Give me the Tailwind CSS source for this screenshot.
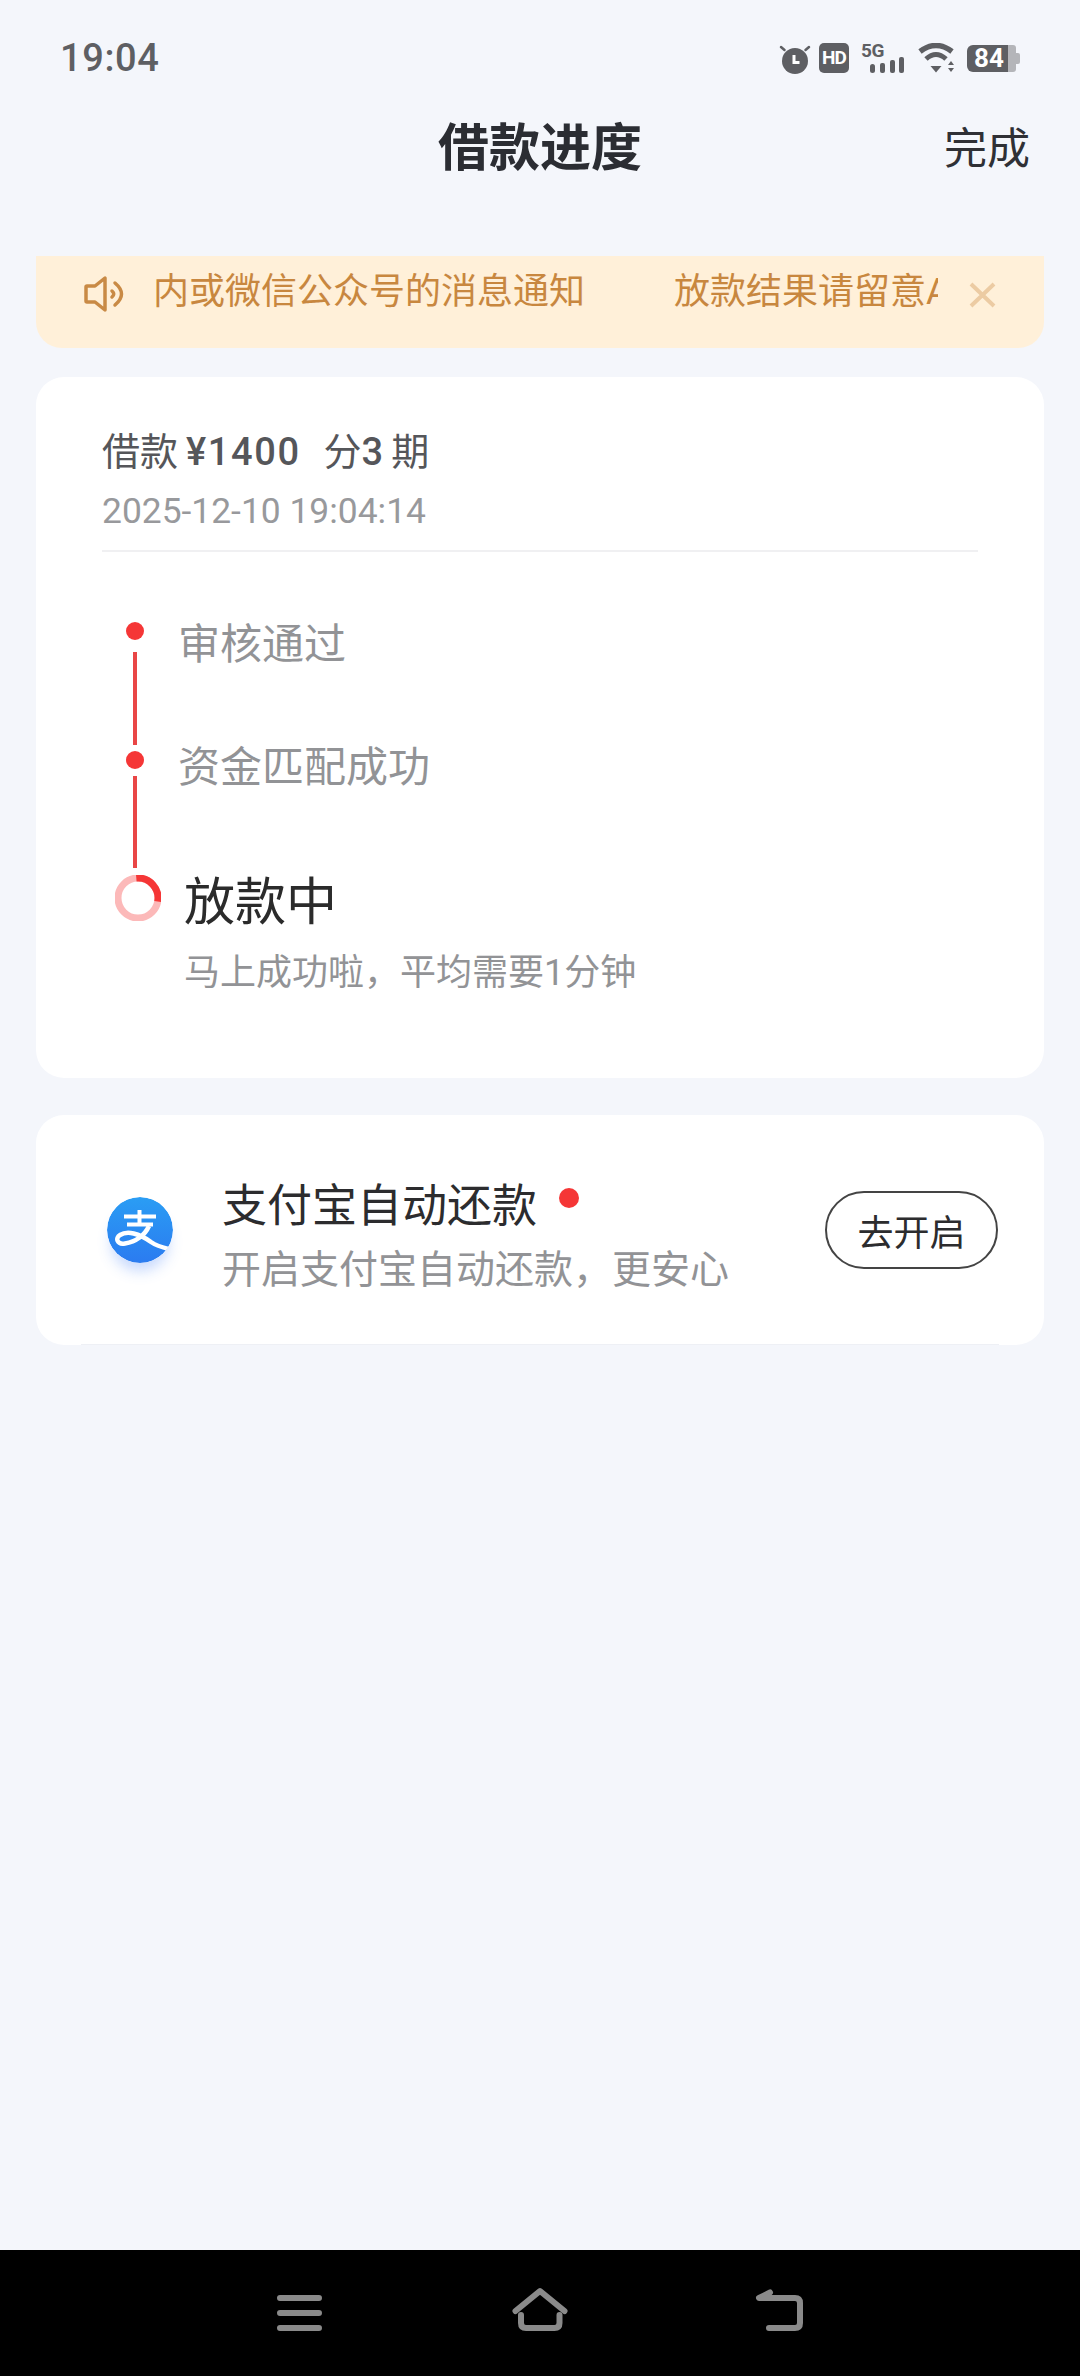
<!DOCTYPE html>
<html lang="zh-CN">
<head>
    <meta charset="UTF-8" />
    <meta name="viewport" content="width=device-width, initial-scale=1.0" />
    <title>借款进度</title>
    <script src="https://cdn.jsdelivr.net/npm/@tailwindcss/browser@4"></script>
</head>
<body class="bg-[#f4f6fb]">
    <div class="w-[1080px] h-[2376px] flex flex-col overflow-hidden bg-[#f4f6fb] font-[Roboto,'Noto_Sans_CJK_SC',sans-serif]">

        <!-- Status bar -->
        <div class="h-[116px] flex items-center justify-between pl-[60px] pr-[60px] text-[#5e5f63]">
            <div class="text-[38px] leading-[44px] font-medium tracking-[0.6px]">19:04</div>
            <div class="flex items-center h-[30px]">
                <svg class="w-[34px] h-[32px]" viewBox="0 0 34 32">
                    <circle cx="17" cy="19" r="13" fill="#5e5f63" />
                    <path d="M3 5 6.5 8M31 5 27.5 8" stroke="#5e5f63" stroke-width="2.5" stroke-linecap="round" />
                    <path d="M16 13v7.5h5.5" fill="none" stroke="#fff" stroke-width="3" />
                </svg>
                <div class="ml-[7px] w-[30px] h-[30px] rounded-[5px] bg-[#5e5f63] flex items-center justify-center text-white text-[19px] leading-[30px] font-bold tracking-[-1px]">HD</div>
                <svg class="ml-[12px] w-[44px] h-[30px] overflow-visible" viewBox="0 0 44 30">
                    <text x="0" y="14" font-size="19" font-weight="700" letter-spacing="-0.5" fill="#5e5f63">5G</text>
                    <rect x="9" y="21" width="5" height="9" rx="2.5" fill="#5e5f63" />
                    <rect x="19" y="20" width="5" height="10" rx="2" fill="#5e5f63" />
                    <rect x="29" y="17" width="5" height="13" rx="2" fill="#5e5f63" />
                    <rect x="38" y="14" width="5" height="16" rx="2" fill="#5e5f63" />
                </svg>
                <svg class="ml-[13px] w-[37px] h-[30px]" viewBox="0 0 37 30">
                    <path d="M2 8.5Q18 -3.5 34 8.5" fill="none" stroke="#5e5f63" stroke-width="5.5" />
                    <path d="M8 16Q18 7 28 16" fill="none" stroke="#5e5f63" stroke-width="5" />
                    <path d="M12.5 23h11L18 29.5z" fill="#5e5f63" />
                    <path d="M30 22h6l-3-4zM30 25h6l-3 4z" fill="#5e5f63" />
                </svg>
                <div class="ml-[12px] flex items-center">
                    <div class="w-[41px] h-[27px] rounded-l-[6px] bg-[#5e5f63] text-white text-[26px] leading-[27px] font-bold text-center pl-[3px]">84</div>
                    <div class="w-[8px] h-[27px] rounded-r-[3px] bg-[#b4b5b9]"></div>
                    <div class="w-[4px] h-[11px] rounded-r-[2px] bg-[#b4b5b9]"></div>
                </div>
            </div>
        </div>

        <!-- Header -->
        <div class="h-[62px] grid grid-cols-[1fr_auto_1fr] items-center px-[50px]">
            <div></div>
            <div class="pt-[2px] text-[51px] leading-[62px] font-bold text-[#2b2d33]">借款进度</div>
            <div class="pt-[2px] justify-self-end text-[43px] leading-[62px] text-[#2f3035]">完成</div>
        </div>

        <!-- Notice banner -->
        <div class="mt-[78px] mx-[36px] h-[92px] rounded-b-[26px] bg-[#fff0d9] flex items-start pl-[46px] shrink-0">
            <svg class="mt-[18px] w-[46px] h-[40px] shrink-0" viewBox="0 0 46 40" fill="none" stroke="#c98a45" stroke-width="3.5" stroke-linecap="round" stroke-linejoin="round">
                <path d="M5 12h8l10-8v32l-10-8H5a1 1 0 0 1-1-1V13a1 1 0 0 1 1-1z" />
                <path d="M30 17q3.5 3 0 6M33 9q13 11 0 22" />
            </svg>
            <div class="ml-[23px] mt-[11px] w-[787px] overflow-hidden flex whitespace-nowrap pl-[2px] text-[36px] leading-[50px] text-[#c8873f]">
                <span>内或微信公众号的消息通知</span>
                <span class="ml-[89px]">放款结果请留意App内或微信公众号的消息通知</span>
            </div>
            <svg class="ml-[31px] mt-[26px] w-[27px] h-[26px] shrink-0" viewBox="0 0 27 26" fill="none" stroke="#eccba3" stroke-width="4">
                <path d="M2 2l23 22M25 2 2 24" />
            </svg>
        </div>

        <!-- Progress card -->
        <div class="mt-[29px] mx-[36px] h-[701px] rounded-[28px] bg-white pt-[53px] px-[66px] shrink-0">
            <div class="text-[38px] leading-[44px] text-[#55565a]">借款<span class="ml-[8px] font-medium tracking-[1.6px]">¥1400</span><span class="ml-[23px]">分</span><span class="font-medium">3</span><span class="ml-[8px]">期</span></div>
            <div class="mt-[17px] text-[35.4px] leading-[40px] text-[#98999c]">2025-12-10 19:04:14</div>
            <div class="mt-[19px] h-[2px] bg-[#f0f0f2]"></div>

            <div class="mt-[70px] flex">
                <!-- Step rail -->
                <div class="w-[46px] ml-[10px] flex flex-col items-center shrink-0">
                    <div class="w-[18px] h-[18px] rounded-full bg-[#f53636]"></div>
                    <div class="mt-[12px] w-[4px] h-[93px] bg-[#e94646]"></div>
                    <div class="mt-[6px] w-[18px] h-[18px] rounded-full bg-[#f53636]"></div>
                    <div class="mt-[7px] w-[4px] h-[92px] bg-[#e94646]"></div>
                    <svg class="mt-[7px] ml-[6px] w-[46px] h-[46px]" viewBox="0 0 46 46" fill="none" stroke-width="7">
                        <circle cx="23" cy="23" r="20" stroke="#fcb9b9" />
                        <path d="M21.3 3.1A20 20 0 0 1 42.7 26.5" stroke="#f53636" />
                    </svg>
                </div>
                <!-- Step labels -->
                <div class="ml-[20px] flex flex-col text-[#929396]">
                    <div class="mt-[1px] text-[42px] leading-[44px]">审核通过</div>
                    <div class="mt-[79px] text-[42px] leading-[44px]">资金匹配成功</div>
                    <div class="mt-[85px] ml-[6px] text-[51px] leading-[56px] text-[#2b2b2b]">放款中</div>
                    <div class="mt-[20px] ml-[6px] text-[36px] leading-[44px]">马上成功啦，平均需要1分钟</div>
                </div>
            </div>
        </div>

        <!-- Alipay card -->
        <div class="relative mt-[37px] mx-[36px] h-[230px] rounded-[28px] bg-white flex items-center shrink-0">
            <div class="ml-[71px] w-[66px] h-[66px] rounded-full shadow-[0_12px_14px_-4px_rgba(70,130,250,0.3)] shrink-0">
                <svg class="w-[66px] h-[66px] rounded-full" viewBox="0 0 66 66">
                    <defs>
                        <linearGradient id="alipayFill" x1="0" y1="0" x2="0" y2="1">
                            <stop offset="0" stop-color="#2a9df4" />
                            <stop offset="1" stop-color="#2b7bf0" />
                        </linearGradient>
                    </defs>
                    <circle cx="33" cy="33" r="33" fill="url(#alipayFill)" />
                    <path d="M17 19.5H49M32.5 13V28M20 27.5H46" fill="none" stroke="#fff" stroke-width="4" />
                    <path d="M42 29C38 38 29 45 18 46.5C10 48 8 41 13 38C20 33.5 32 36 44 45C51 50 58 51 66 53" fill="none" stroke="#fff" stroke-width="4.5" />
                </svg>
            </div>
            <div class="self-start mt-[66px] ml-[49px]">
                <div class="flex items-start">
                    <div class="text-[45px] leading-[52px] text-[#2c2c2e]">支付宝自动还款</div>
                    <div class="ml-[22px] mt-[7px] w-[20px] h-[20px] rounded-full bg-[#f53636]"></div>
                </div>
                <div class="h-[55px] overflow-hidden">
                    <div class="mt-[12px] text-[39px] leading-[50px] text-[#929396] whitespace-nowrap">开启支付宝自动还款，更安心</div>
                </div>
            </div>
            <div class="ml-auto mr-[46px] w-[173px] h-[78px] rounded-full border-2 border-[#444] flex items-center justify-center pt-[7px] text-[36px] text-[#2c2c2e] shrink-0">去开启</div>
            <div class="absolute bottom-0 left-[45px] right-[45px] h-px bg-[#eef0f5]"></div>
        </div>

        <!-- Nav bar -->
        <div class="mt-auto h-[126px] bg-black flex justify-center gap-[180px] pt-[35px] shrink-0">
            <svg class="w-[60px] h-[50px]" viewBox="0 0 60 50" fill="none" stroke="#8a8a8a" stroke-width="6" stroke-linecap="round">
                <path d="M10 13H49M10 28H49M10 43H49" />
            </svg>
            <svg class="w-[60px] h-[50px]" viewBox="0 0 60 50" fill="none" stroke="#8a8a8a" stroke-width="6" stroke-linecap="round" stroke-linejoin="round">
                <path d="M5.5 26 30 6l24.5 20" />
                <path d="M11 30v8q0 5 5 5h28.5q5 0 5-5v-8" />
            </svg>
            <svg class="w-[60px] h-[50px]" viewBox="0 0 60 50" fill="none" stroke="#8a8a8a" stroke-width="6" stroke-linecap="round" stroke-linejoin="round">
                <path d="M20 7.5 9 13H45q5 0 5 5v20q0 5-5 5H19" />
            </svg>
        </div>
    </div>
</body>
</html>
